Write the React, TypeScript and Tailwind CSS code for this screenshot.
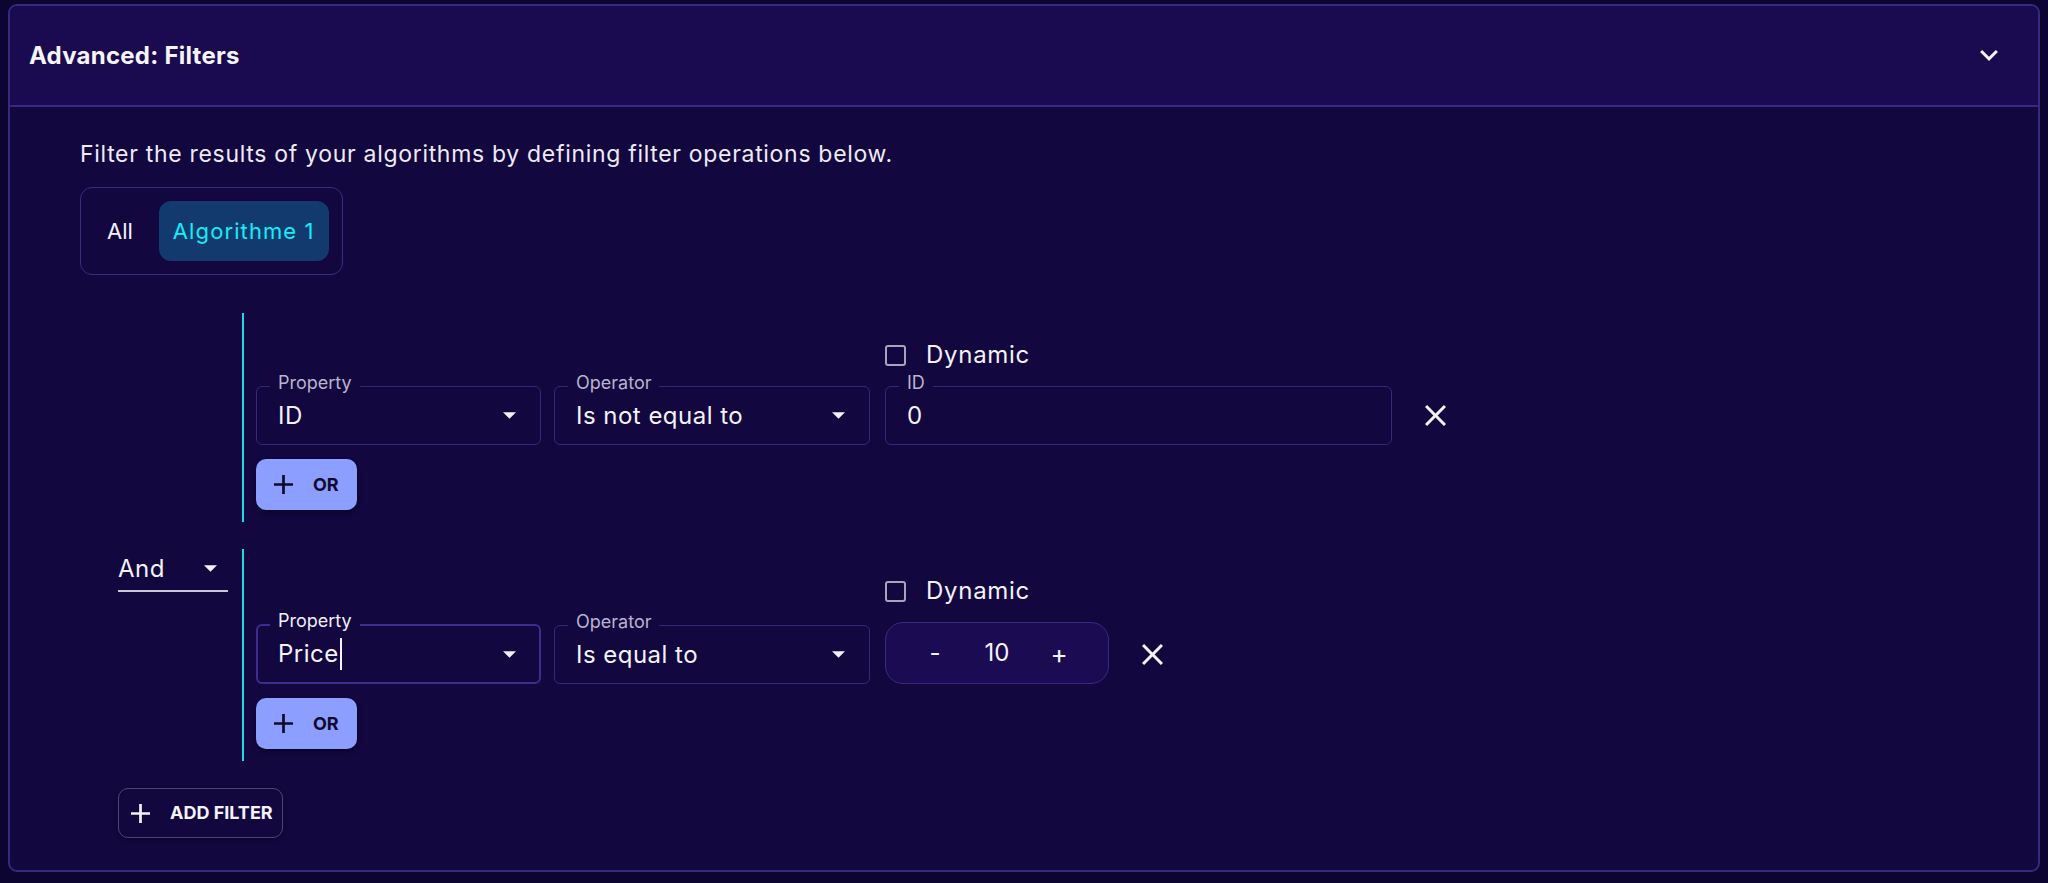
import React from "react";

const ArrowDrop = () => (
    <svg width="13" height="7" viewBox="7 10 10 5" className="shrink-0">
        <path d="M7 10l5 5 5-5z" fill="#f4f2fa" />
    </svg>
);

const CloseIcon = () => (
    <svg width="21" height="21" viewBox="5 5 14 14">
        <path
            d="M19 6.41 17.59 5 12 10.59 6.41 5 5 6.41 10.59 12 5 17.59 6.41 19 12 13.41 17.59 19 19 17.59 13.41 12z"
            fill="#f4f2fa"
        />
    </svg>
);

const PlusIcon = ({ color }: { color: string }) => (
    <svg width="19" height="19" viewBox="5 5 14 14" className="shrink-0">
        <path d="M19 13h-6v6h-2v-6H5v-2h6V5h2v6h6v2z" fill={color} />
    </svg>
);

type FieldProps = {
    label: string;
    value: string;
    width: string;
    select?: boolean;
    focused?: boolean;
};

function OutlinedField({ label, value, width, select, focused }: FieldProps) {
    return (
        <div
            className={`relative flex items-center rounded-[6px] ${width} ${
                focused
                    ? "h-[60px] border-2 border-[#3d2d8e] pl-[20px] pr-[23px]"
                    : "h-[59px] border border-[#35287a] pl-[21px] pr-[24px]"
            }`}
        >
            <span
                className={`absolute bg-[#12073f] px-[8px] text-[18px] leading-[18px] ${
                    focused ? "left-[12px] top-[-14px] text-[#f1eff8]" : "left-[13px] top-[-13px] text-[#b9b4cc]"
                }`}
            >
                {label}
            </span>
            <span className="flex flex-1 items-center text-[24px] leading-[32px] tracking-[0.02em] text-[#f4f2fa]">
                {value}
                {focused && <span className="ml-[1px] inline-block h-[32px] w-[2px] bg-[#f4f2fa]" />}
            </span>
            {select && <ArrowDrop />}
        </div>
    );
}

function Dynamic() {
    return (
        <div className="mb-[16px] flex h-[30px] items-center gap-[20px]">
            <span className="h-[21px] w-[21px] rounded-[3px] border-2 border-[#a9a4b9]" />
            <span className="text-[24px] leading-[30px] tracking-[0.03em] text-[#f4f2fa]">Dynamic</span>
        </div>
    );
}

function OrButton() {
    return (
        <button className="mt-[14px] flex h-[51px] w-[101px] items-center gap-[20px] rounded-[10px] bg-[#8c9eff] pl-[18px] shadow-[0_3px_5px_rgba(0,0,0,0.35)]">
            <PlusIcon color="#0f0b2e" />
            <span className="text-[18px] font-bold leading-none text-[#0f0b2e]">OR</span>
        </button>
    );
}

function RemoveButton() {
    return (
        <div className="ml-[15px] flex h-[59px] w-[56px] items-center justify-center">
            <CloseIcon />
        </div>
    );
}

function Stepper() {
    return (
        <div className="flex h-[62px] w-[224px] items-center rounded-[18px] border border-[#3a2b82] bg-[#1a0b52] px-[29px] text-[24px] text-[#f4f2fa]">
            <span className="w-[40px] text-center">-</span>
            <span className="flex-1 text-center">10</span>
            <span className="w-[40px] text-center text-[26px]">+</span>
        </div>
    );
}

function FilterGroup({
    connector,
    children,
}: {
    connector?: boolean;
    children: React.ReactNode;
}) {
    return (
        <div className="flex">
            <div className="w-[124px] shrink-0">
                {connector && (
                    <div className="flex h-[43px] w-[110px] items-center border-b-2 border-[#cbc7d8] pb-[2px]">
                        <span className="flex-1 text-[24px] leading-[36px] tracking-[0.02em] text-[#f4f2fa]">And</span>
                        <span className="mr-[11px]">
                            <ArrowDrop />
                        </span>
                    </div>
                )}
            </div>
            <div className="w-[2px] shrink-0 bg-[#1fd9e2]" />
            <div className="flex flex-col items-start pb-[12px] pl-[12px] pt-[27px]">{children}</div>
        </div>
    );
}

export default function App() {
    return (
        <div className="min-h-screen bg-[#0d0531] pl-[8px] pr-[8px] pt-[4px] font-['Inter',sans-serif]">
            <div className="overflow-hidden rounded-[9px] border-2 border-[#372882] bg-[#12073f]">
                <div className="flex h-[101px] items-center justify-between border-b-2 border-[#372882] bg-[#1a0b50] pl-[19px] pr-[40px]">
                    <h2 className="text-[24px] font-bold tracking-[0.01em] text-[#f6f4fb]">Advanced: Filters</h2>
                    <svg width="18" height="11" viewBox="6 8.59 12 7.41">
                        <path d="M16.59 8.59 12 13.17 7.41 8.59 6 10l6 6 6-6z" fill="#f6f4fb" />
                    </svg>
                </div>

                <div className="pb-[32px] pl-[70px] pt-[31px]">
                    <p className="text-[23px] leading-[32px] tracking-[0.03em] text-[#eeebf6]">
                        Filter the results of your algorithms by defining filter operations below.
                    </p>

                    <div className="mt-[17px] inline-flex items-center gap-[13px] rounded-[12px] border border-[#3a2d80] p-[13px]">
                        <button className="px-[13px] text-[22px] text-[#f4f2fa]">All</button>
                        <button className="flex h-[60px] items-center rounded-[12px] bg-[#133a6f] px-[14px] text-[22px] tracking-[0.05em] text-[#14eef6]">
                            Algorithme 1
                        </button>
                    </div>

                    <div className="ml-[38px] mt-[38px] flex flex-col">
                        <FilterGroup>
                            <div className="flex items-end">
                                <OutlinedField label="Property" value="ID" width="w-[285px]" select />
                                <div className="ml-[13px]">
                                    <OutlinedField label="Operator" value="Is not equal to" width="w-[316px]" select />
                                </div>
                                <div className="ml-[15px] flex flex-col">
                                    <Dynamic />
                                    <OutlinedField label="ID" value="0" width="w-[507px]" />
                                </div>
                                <RemoveButton />
                            </div>
                            <OrButton />
                        </FilterGroup>

                        <div className="mt-[27px]">
                            <FilterGroup connector>
                                <div className="flex items-end">
                                    <OutlinedField label="Property" value="Price" width="w-[285px]" select focused />
                                    <div className="ml-[13px]">
                                        <OutlinedField label="Operator" value="Is equal to" width="w-[316px]" select />
                                    </div>
                                    <div className="ml-[15px] flex flex-col">
                                        <Dynamic />
                                        <Stepper />
                                    </div>
                                    <RemoveButton />
                                </div>
                                <OrButton />
                            </FilterGroup>
                        </div>

                        <button className="mt-[27px] flex h-[50px] w-[165px] items-center gap-[20px] whitespace-nowrap rounded-[10px] border-[1.5px] border-[#4d4674] pl-[12px] shadow-[0_2px_4px_rgba(0,0,0,0.3)]">
                            <PlusIcon color="#f4f2fa" />
                            <span className="text-[18px] font-bold leading-none text-[#f6f4fb]">ADD FILTER</span>
                        </button>
                    </div>
                </div>
            </div>
        </div>
    );
}
